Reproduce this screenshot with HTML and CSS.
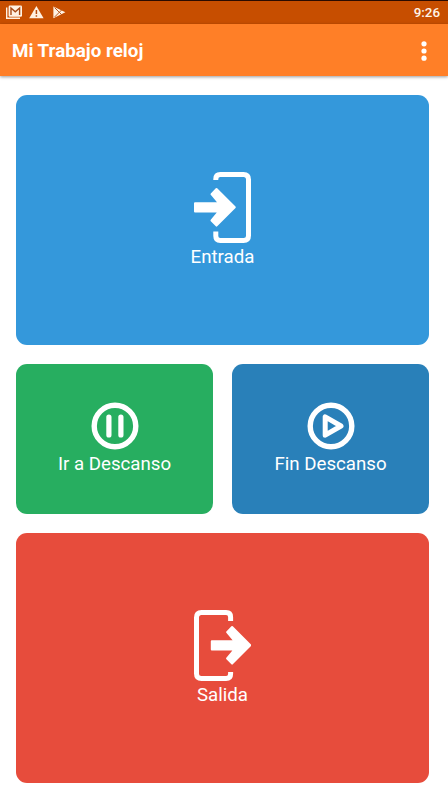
FILE: index.html
```html
<!DOCTYPE html>
<html lang="es">
<head>
<meta charset="utf-8">
<title>Mi Trabajo reloj</title>
<link rel="stylesheet" href="styles.css">
</head>
<body>
<div class="status">
  <svg class="notices" width="70" height="24" viewBox="0 0 70 24">
    <path d="M6.7 7.5V18.3H20" fill="none" stroke="#fff1e2" stroke-width="1.4"/>
    <rect x="8.6" y="5.6" width="13.4" height="11.2" rx="1.3" fill="#fff1e2"/>
    <path d="M11 15V8L15.3 11.8L19.6 8V15" fill="none" stroke="#a84a16" stroke-width="1.4"/>
    <path d="M36.4 6L43.6 18.2H29.2Z" fill="#fff1e2"/>
    <path d="M36.4 10V14M36.4 15.2V16.8" stroke="#b54d10" stroke-width="1.5"/>
    <path d="M53.4 6.4L65.4 12.3L53.4 18.2Z" fill="#fff1e2"/>
    <path d="M54.6 7.6L62.2 15.2M54.6 17L62.2 9.4" stroke="#b85a22" stroke-width="1"/>
  </svg>
  <span class="clock">9:26</span>
</div>
<header class="bar">
  <h1 class="title">Mi Trabajo reloj</h1>
  <svg class="more" width="8" height="22" viewBox="0 0 8 22" fill="#fff"><circle cx="4" cy="3.8" r="2.6"/><circle cx="4" cy="11" r="2.6"/><circle cx="4" cy="18.2" r="2.6"/></svg>
</header>
<main class="grid">
  <button class="card wide entry">
    <svg width="57" height="71" viewBox="0 0 57 71" fill="none" stroke="#fff">
      <path d="M21.8 8V7Q21.8 2.5 26.3 2.5H49.5Q54.5 2.5 54.5 7.5V63.5Q54.5 68.5 49.5 68.5H26.3Q21.8 68.5 21.8 64V59.5" stroke-width="5"/>
      <path d="M40.8 35.3L22.5 53.6L17.5 48.5L25 39.4H1V31.2H25L17.5 22.1L22.5 17Z" fill="#fff" stroke-width="2" stroke-linejoin="round"/>
    </svg>
    <span class="label">Entrada</span>
  </button>
  <button class="card pause">
    <svg class="round" width="48" height="48" viewBox="0 0 48 48" fill="none" stroke="#fff">
      <circle cx="24" cy="24" r="20.8" stroke-width="5.4"/>
      <path d="M17.9 15V33M29.9 15V33" stroke-width="5.2" stroke-linecap="round"/>
    </svg>
    <span class="label">Ir a Descanso</span>
  </button>
  <button class="card resume">
    <svg class="round" width="48" height="48" viewBox="0 0 48 48" fill="none" stroke="#fff">
      <circle cx="24" cy="24" r="20.8" stroke-width="5.4"/>
      <path d="M18.2 14.8V33.2L34 24Z" stroke-width="5" stroke-linejoin="round"/>
    </svg>
    <span class="label">Fin Descanso</span>
  </button>
  <button class="card wide leave">
    <svg width="57" height="71" viewBox="0 0 57 71" fill="none" stroke="#fff">
      <path d="M36.6 11V7Q36.6 2.5 32.1 2.5H7.5Q2.5 2.5 2.5 7.5V63.5Q2.5 68.5 7.5 68.5H32.1Q36.6 68.5 36.6 64V62" stroke-width="5"/>
      <path d="M56.4 35.3L38.1 53.6L33.1 48.5L40.6 39.4H17.8V31.2H40.6L33.1 22.1L38.1 17Z" fill="#fff" stroke-width="2" stroke-linejoin="round"/>
    </svg>
    <span class="label">Salida</span>
  </button>
</main>
</body>
</html>
```
FILE: styles.css
```css
* { box-sizing: border-box; }
body {
  margin: 0;
  height: 800px;
  overflow: hidden;
  background: #fff;
  color: #fff;
  font-family: Roboto, "Liberation Sans", sans-serif;
}
.status {
  display: flex;
  justify-content: space-between;
  align-items: center;
  height: 24px;
  padding-right: 8px;
  border-top: 1px solid #2b0b00;
  background: #c74e00;
}
.notices { display: block; margin-top: -1px; }
.clock { font-size: 13.4px; font-weight: 500; line-height: 22px; color: #fff4e8; }
.bar {
  display: flex;
  justify-content: space-between;
  align-items: center;
  height: 52px;
  padding: 0 20px 0 12px;
  background: #ff7f27;
  box-shadow: 0 1px 3px rgba(0, 0, 0, .4);
}
.title { margin: 2px 0 0; font-size: 18.8px; line-height: 24px; font-weight: 700; }
.more { margin-top: 2px; }
.grid {
  display: grid;
  grid-template-columns: 197px 197px;
  grid-template-rows: 250px 150px 250px;
  gap: 19px;
  padding: 19px 19px 17px 16px;
}
.card {
  display: flex;
  flex-direction: column;
  align-items: center;
  justify-content: center;
  padding: 0;
  border: 0;
  border-radius: 11px;
  color: inherit;
  font: inherit;
}
.card svg { display: block; }
.card .round { margin: -1px 0 0; }
.wide { grid-column: span 2; }
.entry { background: #3498db; }
.pause { background: #27ae60; }
.resume { background: #2980b9; }
.leave { background: #e74c3c; }
.label { padding-top: 2px; margin-bottom: -2px; font-size: 18.7px; line-height: 25px; white-space: nowrap; }
```
